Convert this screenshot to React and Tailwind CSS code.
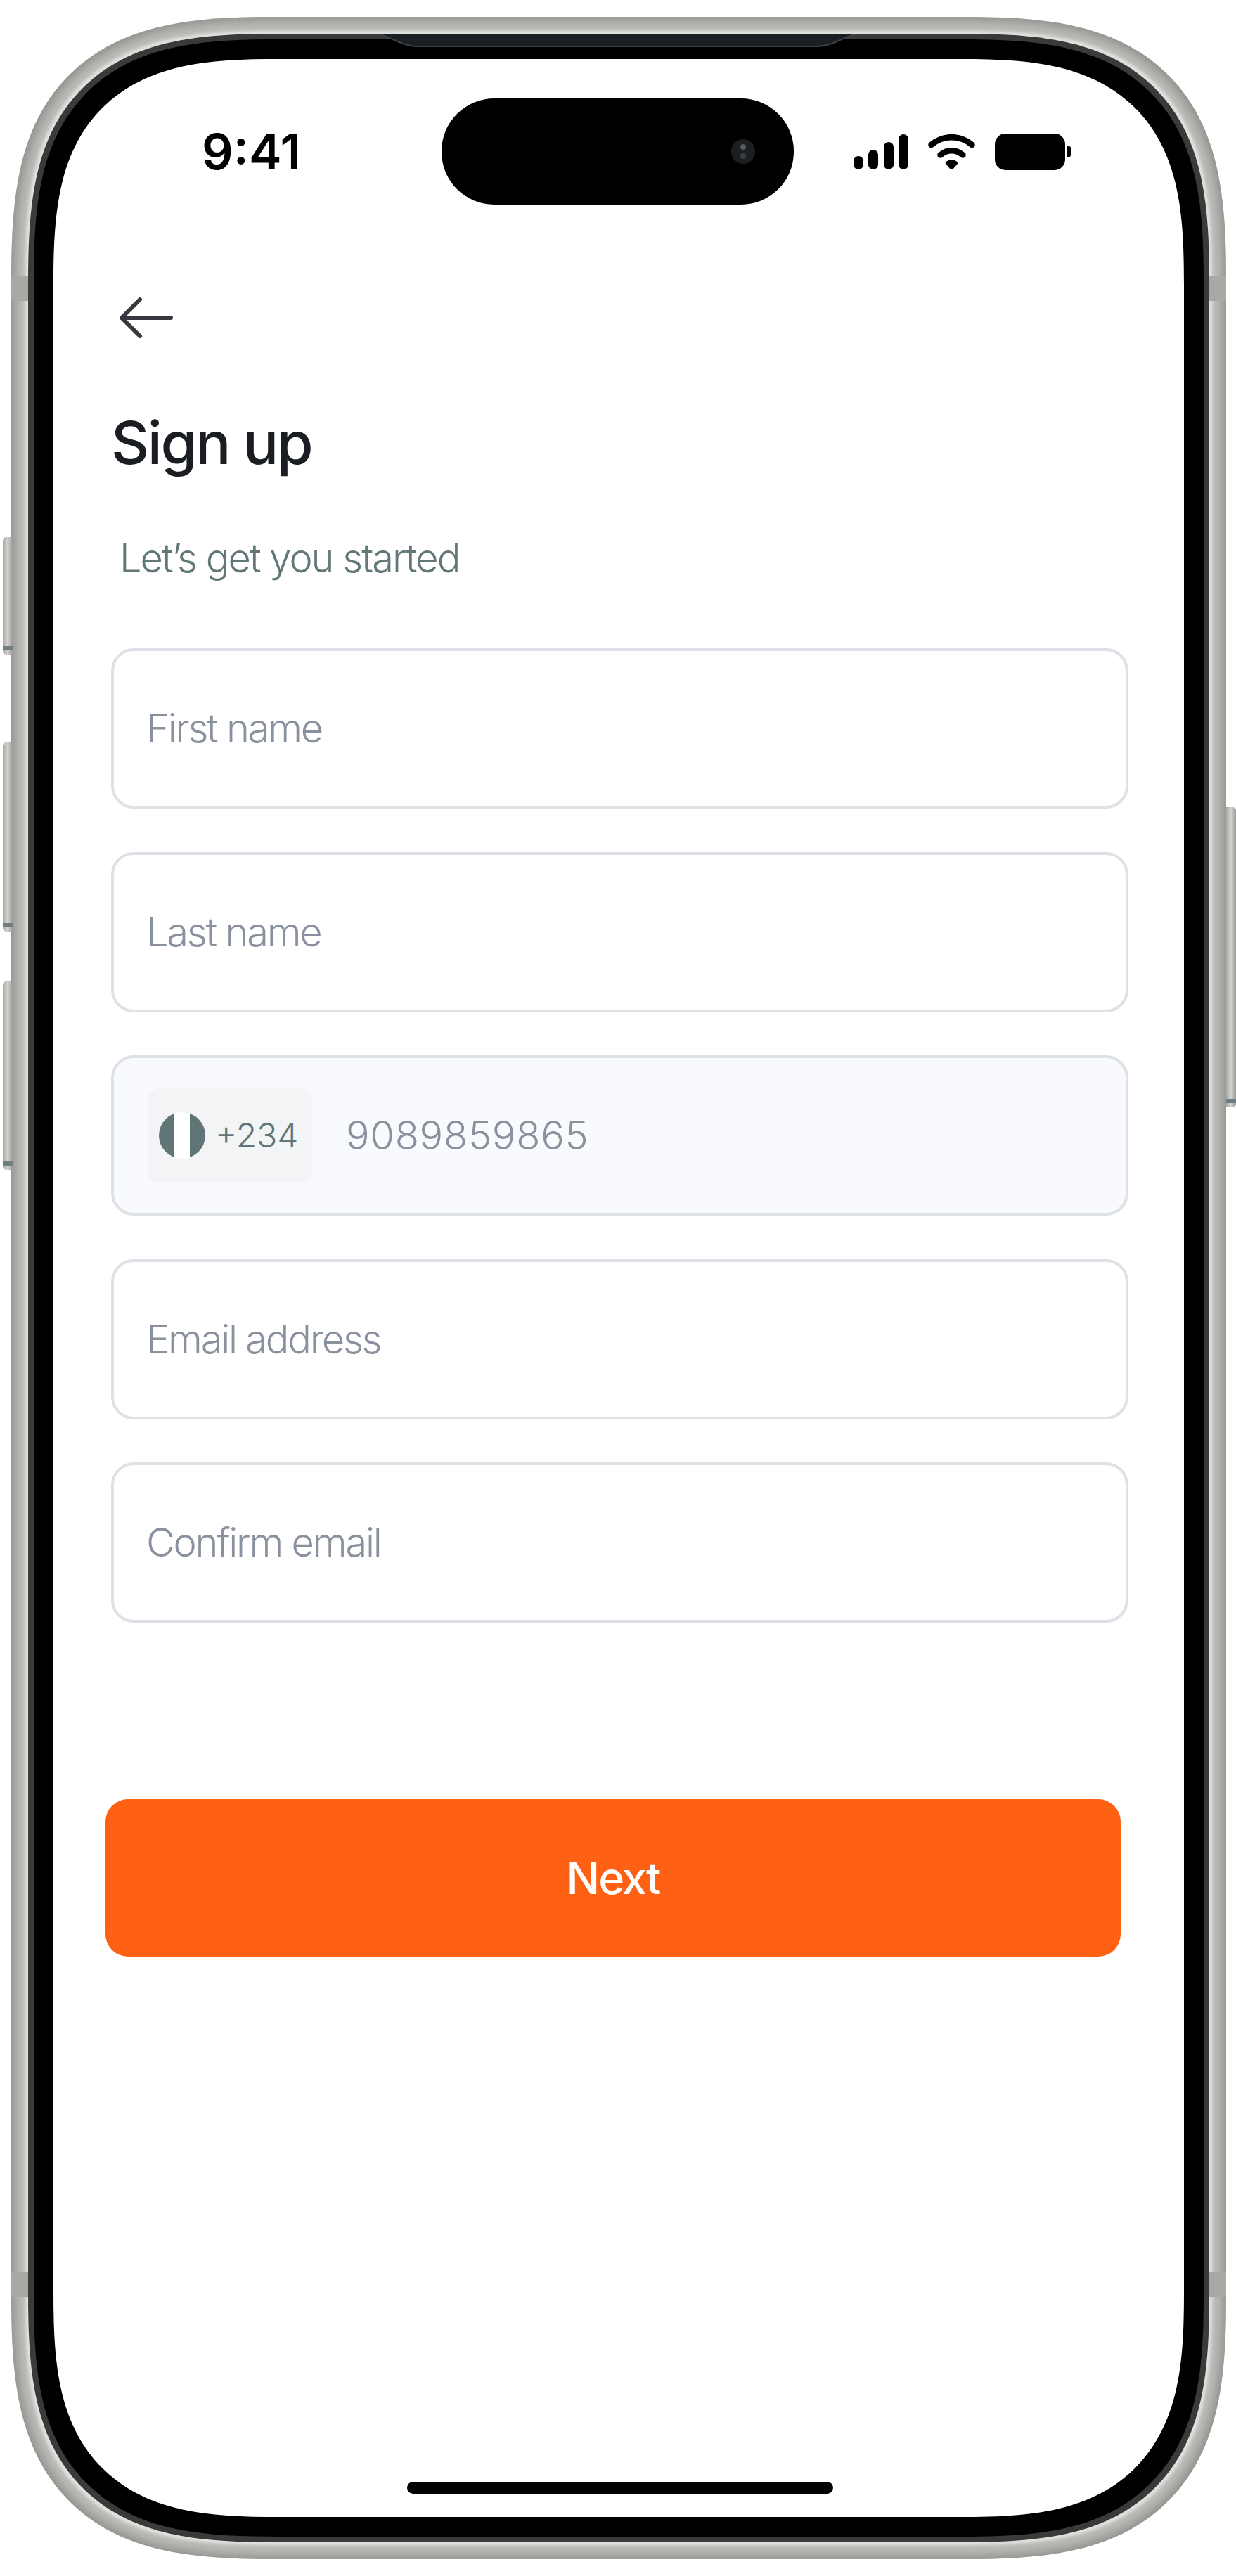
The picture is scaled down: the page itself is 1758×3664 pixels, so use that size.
import React from "react";

const SANS = "font-['Inter',sans-serif]";

const Field = ({ label }) => (
  <div className={`h-[228px] flex items-center pl-[46px] rounded-[32px] border-4 border-[#dee1e6] bg-white text-[56px] font-[350] tracking-[-2.25px] text-[#8a919e] ${SANS}`}>
    {label}
  </div>
);

const Flag = () => (
  <div className="w-[66px] h-[66px] rounded-full overflow-hidden flex">
    <div className="flex-1 bg-[#5f7576]" />
    <div className="flex-1 bg-white" />
    <div className="flex-1 bg-[#5f7576]" />
  </div>
);

const SignalIcon = () => (
  <svg width="78" height="50" viewBox="0 0 78 50" fill="#000">
    <rect x="0" y="31" width="14" height="19" rx="7" />
    <rect x="21" y="22" width="14" height="28" rx="7" />
    <rect x="43" y="11" width="14" height="39" rx="7" />
    <rect x="64" y="0" width="14" height="50" rx="7" />
  </svg>
);

const WifiIcon = () => (
  <svg width="67" height="50" viewBox="0 0 67 50" fill="none">
    <path d="M4.5 15C21 0.5 46 0.5 62.5 15" stroke="#000" strokeWidth="8.5" strokeLinecap="round" />
    <path d="M17.5 29.5C27 21 40 21 49.5 29.5" stroke="#000" strokeWidth="8.5" strokeLinecap="round" />
    <path d="M33.5 50C32.5 50 31.5 49.4 30.5 48.3L25.5 42.5C24.3 41 24.5 40 25.8 39C30.5 35.4 36.5 35.4 41.2 39C42.5 40 42.7 41 41.5 42.5L36.5 48.3C35.5 49.4 34.5 50 33.5 50Z" fill="#000" />
  </svg>
);

const BatteryIcon = () => (
  <div className="flex items-center gap-[3px]">
    <div className="w-[100px] h-[52px] rounded-[15px] bg-black" />
    <div className="w-[6px] h-[17px] rounded-r-full bg-black" />
  </div>
);

const BackArrow = () => (
  <svg width="76" height="60" viewBox="0 0 76 60" fill="none" stroke="#36393d" strokeWidth="6" strokeLinecap="round" strokeLinejoin="round">
    <path d="M3 30H73" />
    <path d="M29 4L3 30L29 56" />
  </svg>
);

const Camera = () => (
  <div className="w-[34px] h-[35px] rounded-full bg-[#1c1e22] flex flex-col items-center justify-center gap-[5px]">
    <div className="w-[8px] h-[8px] rounded-full bg-[#55585c]" />
    <div className="w-[8px] h-[8px] rounded-full bg-[#3b3e42]" />
  </div>
);

const SideButton = ({ className }) => (
  <div className={`absolute w-[14px] flex flex-col justify-end pb-[6px] bg-gradient-to-r from-[#a9a9a7] via-[#d2d2cf] to-[#999997] ${className}`}>
    <div className="h-[6px] bg-[#6f7d80]" />
  </div>
);

export default function App() {
  return (
    <div className="w-[1758px] h-[3664px] bg-white pt-[24px] pl-[16px]">
      <div className="relative w-[1728px] h-[3616px] rounded-[380px] [corner-shape:superellipse(1.5)] bg-[#bdbdba] p-[24px] shadow-[inset_0_0_16px_5px_#8c8c88]">
        {/* hardware buttons */}
        <SideButton className="-left-[12px] top-[740px] h-[167px] rounded-l-[5px]" />
        <SideButton className="-left-[12px] top-[1032px] h-[269px] rounded-l-[5px]" />
        <SideButton className="-left-[12px] top-[1372px] h-[268px] rounded-l-[5px]" />
        <SideButton className="-right-[14px] top-[1124px] h-[427px] rounded-r-[5px]" />

        {/* antenna bands */}
        <div className="absolute left-0 top-[369px] w-[24px] h-[35px] bg-[#a8a8a4]" />
        <div className="absolute right-0 top-[369px] w-[24px] h-[35px] bg-[#a8a8a4]" />
        <div className="absolute left-0 top-[3207px] w-[24px] h-[36px] bg-[#a8a8a4]" />
        <div className="absolute right-0 top-[3207px] w-[24px] h-[36px] bg-[#a8a8a4]" />

        <div className="h-full rounded-[356px] [corner-shape:superellipse(1.5)] bg-[#3a3a3a] p-[8px] shadow-[0_0_4px_4px_#e2e2df]">
          <div className="relative h-full rounded-[348px] [corner-shape:superellipse(1.5)] bg-black p-[28px]">
            {/* speaker grille */}
            <svg className="absolute left-[481px] -top-[8px]" width="698" height="22" viewBox="0 0 698 22" fill="#1b1f23">
              <path d="M0 0C25 0 35 16 63 18H635C663 16 673 0 698 0Z" stroke="#3f4347" strokeWidth="2" />
            </svg>

            <div className="h-full rounded-[320px] [corner-shape:superellipse(1.5)] bg-white overflow-hidden flex flex-col">
              <div className="flex items-center h-[151px] mt-[56px] pl-[211px]">
                <div className={`w-[341px] text-[70px] leading-none font-semibold text-black ${SANS}`}>9:41</div>
                <div className="flex items-center w-[501px] h-[151px] rounded-[75px] bg-black pl-[412px]">
                  <Camera />
                </div>
                <div className="flex items-center gap-[10px] ml-[85px]">
                  <SignalIcon />
                  <div className="ml-[18px]"><WifiIcon /></div>
                  <div className="ml-[18px]"><BatteryIcon /></div>
                </div>
              </div>

              <div className="mt-[131px] ml-[94px]">
                <BackArrow />
              </div>

              <div className="px-[82px] pr-[79px]">
                <h1 className={`mt-[98px] text-[84px] leading-[100px] font-medium tracking-[-0.03em] text-[#1a1d21] ${SANS}`}>
                  Sign up
                </h1>
                <p className={`mt-[79px] ml-[12px] text-[56px] leading-[70px] font-[350] tracking-[-2px] text-[#627777] ${SANS}`}>
                  Let’s get you started
                </p>

                <div className="mt-[93px] flex flex-col gap-[61.5px]">
                  <Field label="First name" />
                  <Field label="Last name" />
                  <div className={`h-[228px] flex items-center pl-[48px] rounded-[32px] border-4 border-[#dee1e6] bg-[#f9fafd] ${SANS}`}>
                    <div className="flex items-center w-[234px] h-[135px] rounded-[16px] bg-[#f3f4f6] pl-[16px]">
                      <Flag />
                      <span className="ml-[14px] text-[48px] font-light text-[#5f7576]">+234</span>
                    </div>
                    <span className="ml-[48px] text-[56px] font-[350] tracking-[0.7px] text-[#8a919e]">9089859865</span>
                  </div>
                  <Field label="Email address" />
                  <Field label="Confirm email" />
                </div>

                <button className={`block w-[1444px] h-[224px] -ml-[8px] mt-[251px] rounded-[32px] bg-[#ff6114] text-[63px] font-medium tracking-[-2px] text-white ${SANS}`}>
                  Next
                </button>
              </div>

              <div className="mt-auto mb-[33px] ml-[503px] w-[606px] h-[17px] rounded-full bg-black" />
            </div>
          </div>
        </div>
      </div>
    </div>
  );
}
